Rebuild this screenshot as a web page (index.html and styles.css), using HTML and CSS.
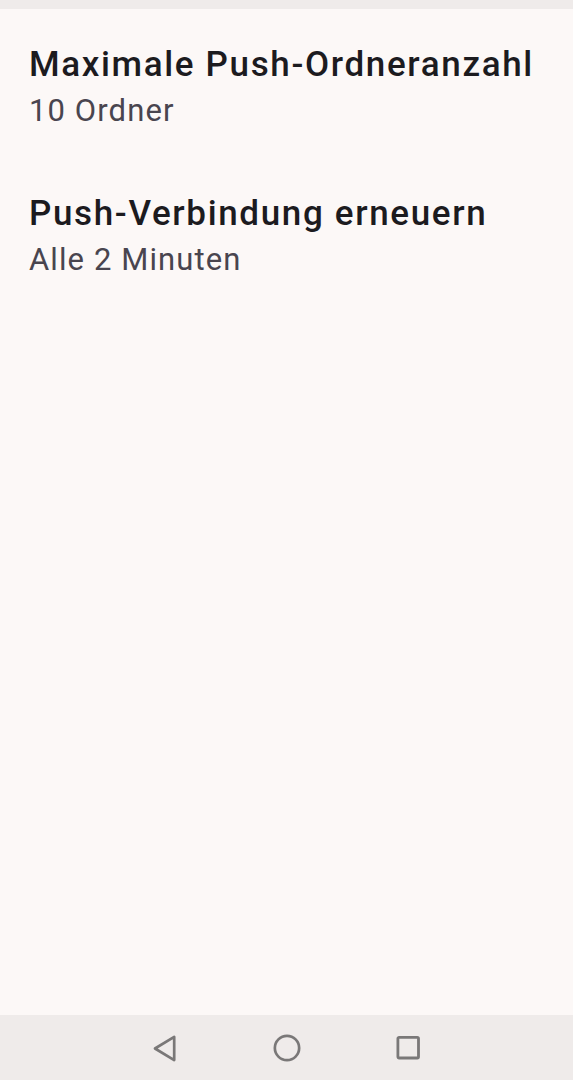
FILE: index.html
```html
<!DOCTYPE html>
<html lang="de">
<head>
	<meta charset="UTF-8">
	<title>Push</title>
	<link rel="stylesheet" href="styles.css">
</head>
<body>
	<div class="status"></div>
	<div class="content">
		<div class="pref">
			<div class="pref-title">Maximale Push-Ordneranzahl</div>
			<div class="pref-summary">10 Ordner</div>
		</div>
		<div class="pref">
			<div class="pref-title">Push-Verbindung erneuern</div>
			<div class="pref-summary">Alle 2 Minuten</div>
		</div>
	</div>
	<div class="navbar">
		<svg class="nav-icon" width="30" height="30" viewBox="0 0 30 30">
			<path d="M24.2 3.9 L24.2 27.1 L5 15.5 Z" fill="none" stroke="#7a7878" stroke-width="2.7" stroke-linejoin="round"/>
		</svg>
		<svg class="nav-icon" width="30" height="30" viewBox="0 0 30 30">
			<circle cx="15" cy="15" r="12.15" fill="none" stroke="#7a7878" stroke-width="2.7"/>
		</svg>
		<svg class="nav-icon" width="30" height="30" viewBox="0 0 30 30">
			<rect x="3.9" y="4.4" width="20.6" height="20.6" rx="1.2" fill="none" stroke="#7a7878" stroke-width="2.8"/>
		</svg>
	</div>
</body>
</html>
```

FILE: styles.css
```css
* {
	margin: 0;
	padding: 0;
}
html, body {
	height: 100%;
}
body {
	display: flex;
	flex-direction: column;
	background: #fcf8f7;
	font-family: Roboto, "Liberation Sans", sans-serif;
}
.status {
	height: 9px;
	background: #efebea;
}
.content {
	flex: 1;
	padding: 34px 29px 0;
}
.pref {
	padding-bottom: 58px;
}
.pref-title {
	font-size: 35px;
	font-weight: 500;
	line-height: 44px;
	letter-spacing: 1.65px;
	color: #1c1b1f;
}
.pref-summary {
	font-size: 31px;
	line-height: 47px;
	letter-spacing: 1.1px;
	color: #49454f;
}
.navbar {
	height: 65px;
	background: #efebea;
	display: flex;
	align-items: center;
	justify-content: center;
	gap: 92px;
}
```
